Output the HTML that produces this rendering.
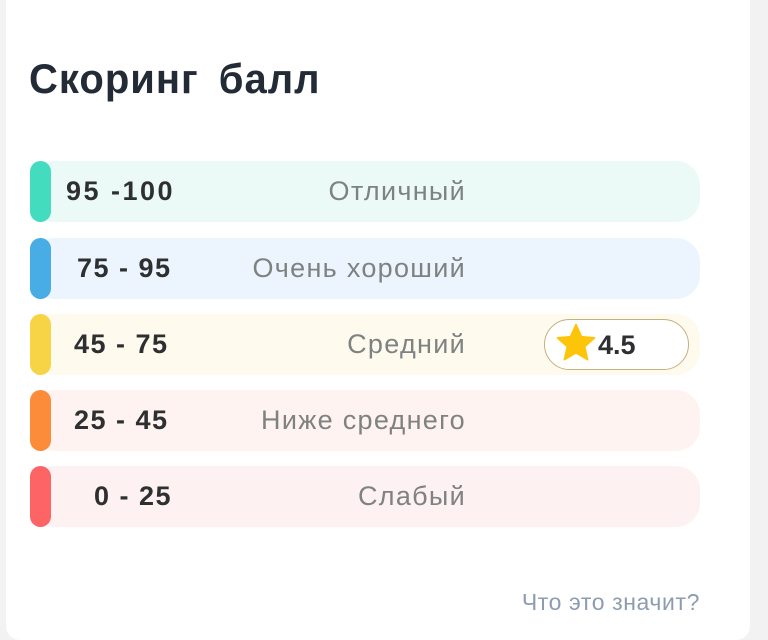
<!DOCTYPE html>
<html><head><meta charset="utf-8"><style>
body{margin:0;width:768px;height:630px;background:#f2f2f3;position:relative;overflow:hidden;font-family:"Liberation Sans",sans-serif}
.card{position:absolute;left:6px;top:-20px;width:744px;height:660px;background:#fff;border-radius:14px}
h1{position:absolute;left:29px;top:56px;margin:0;font-size:40px;font-weight:bold;color:#232b36;letter-spacing:1px;word-spacing:8px;transform:scaleY(1.05);transform-origin:left top}
.row{position:absolute;left:30px;width:670px;height:61px;border-radius:24px}
.bar{position:absolute;left:0;top:0;width:21px;height:61px;border-radius:11px}
.num{position:absolute;top:0;line-height:61px;font-size:27px;font-weight:bold;color:#2e2f31;letter-spacing:1.5px}
.lab{position:absolute;right:234px;top:0;line-height:61px;font-size:27px;color:#7e8280;letter-spacing:1.3px}
.badge{position:absolute;left:544px;top:319px;width:143px;height:49px;border:1.5px solid #c3b27e;border-radius:26px;background:#fff}
.q{position:absolute;right:68px;top:589px;font-size:23px;color:#8d9cb0;letter-spacing:0.6px}
</style></head><body>
<div class="card"></div>
<h1>Скоринг балл</h1>
<div class="row" style="top:161px;background:#ebfaf6"><div class="bar" style="background:#44dcbf"></div><div class="num" style="left:36px;letter-spacing:2.5px">95 -100</div><div class="lab">Отличный</div></div>
<div class="row" style="top:238px;background:#ecf5fe"><div class="bar" style="background:#48ade4"></div><div class="num" style="left:47px">75 - 95</div><div class="lab">Очень хороший</div></div>
<div class="row" style="top:314px;background:#fefaee"><div class="bar" style="background:#f7d346"></div><div class="num" style="left:44px">45 - 75</div><div class="lab">Средний</div></div>
<div class="row" style="top:390px;background:#fef3f0"><div class="bar" style="background:#fc8b3a"></div><div class="num" style="left:44px">25 - 45</div><div class="lab">Ниже среднего</div></div>
<div class="row" style="top:466px;background:#fef1f1"><div class="bar" style="background:#fd6466"></div><div class="num" style="left:64px">0 - 25</div><div class="lab">Слабый</div></div>
<div class="badge">
<svg style="position:absolute;left:10px;top:2px" width="42" height="42" viewBox="0 0 24 24"><path d="M12 1.5l3.1 6.9 7.4.7-5.6 5 1.7 7.4L12 17.6l-6.6 3.9 1.7-7.4-5.6-5 7.4-.7z" fill="#fcc50a" stroke="#fcc50a" stroke-linejoin="round" stroke-width="1"/></svg>
<div style="position:absolute;left:53px;top:0;line-height:51px;font-size:27px;font-weight:bold;color:#2e2f31">4.5</div>
</div>
<div class="q">Что это значит?</div>
</body></html>
